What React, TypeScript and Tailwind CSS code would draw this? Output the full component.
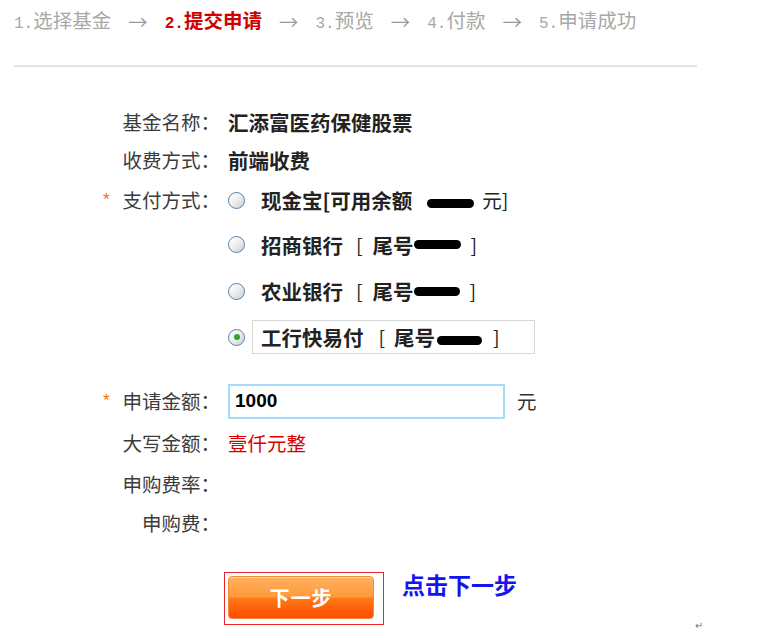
const cjk = "font-['Noto_Sans_CJK_SC',sans-serif]";

function Blob({ w }: { w: number }) {
  return (
    <span
      className="inline-block h-[9px] rounded-full bg-black align-middle"
      style={{ width: w }}
    />
  );
}

function Radio({ checked = false }: { checked?: boolean }) {
  return (
    <span className="flex h-[17px] w-[17px] shrink-0 items-center justify-center rounded-full border-[1.5px] border-[#5580aa] bg-[linear-gradient(135deg,#ffffff_0%,#f0f0f0_45%,#cfcfcf_100%)]">
      {checked && <span className="h-[6px] w-[6px] rounded-full bg-[#2fa52f]" />}
    </span>
  );
}

function Label({ text, required = false }: { text: string; required?: boolean }) {
  return (
    <div className="flex w-[220px] shrink-0 items-center justify-end text-[19.5px] leading-[22px] text-[#3c3c3c]">
      {required && (
        <span className="mr-[11px] font-['Liberation_Mono',monospace] text-[17px] leading-none text-[#ff6a00]">*</span>
      )}
      <span>{text}</span>
    </div>
  );
}

const steps = [
  { n: "1.", t: "选择基金", on: false },
  { n: "2.", t: "提交申请", on: true },
  { n: "3.", t: "预览", on: false },
  { n: "4.", t: "付款", on: false },
  { n: "5.", t: "申请成功", on: false },
];

export default function App() {
  return (
    <div className={`h-[631px] w-[784px] overflow-hidden bg-white ${cjk}`}>
      {/* steps */}
      <div className="flex h-[44px] items-center gap-[17px] pl-[14px] text-[19.5px] leading-[22px]">
        {steps.map((s, i) => (
          <div key={s.t} className="flex items-center gap-[17px]">
            {i > 0 && <span className="text-[#9a9a9a]">→</span>}
            <span className={s.on ? "font-bold text-[#d00000]" : "text-[#a8a8a8]"}>
              <span className="font-['Liberation_Mono',monospace] text-[16px]">{s.n}</span>
              {s.t}
            </span>
          </div>
        ))}
      </div>
      <div className="ml-[14px] mt-[21px] h-[2px] w-[683px] bg-[#e3e3e3]" />

      {/* form */}
      <div className="mt-[36px] flex flex-col">
        <div className="flex h-[38px] items-center">
          <Label text="基金名称：" />
          <span className="ml-[8px] text-[20.5px] font-bold text-[#222]">汇添富医药保健股票</span>
        </div>
        <div className="flex h-[38px] items-center">
          <Label text="收费方式：" />
          <span className="ml-[8px] text-[20.5px] font-bold text-[#222]">前端收费</span>
        </div>

        <div className="flex items-start">
          <div className="flex h-[42px] items-center">
            <Label text="支付方式：" required />
          </div>
          <div className="ml-[8px] flex flex-col text-[20.5px] leading-[24px] text-[#222]">
            <div className="flex h-[42px] items-center">
              <Radio />
              <span className="ml-[16px] font-bold">现金宝[可用余额</span>
              <span className="ml-[15px]"><Blob w={47} /></span>
              <span className="ml-[8px] text-[19.5px]">元]</span>
            </div>
            <div className="flex h-[47px] items-center">
              <Radio />
              <span className="ml-[16px] font-bold">招商银行</span>
              <span className="ml-[13px] text-[19.5px]">[</span>
              <span className="ml-[10px] font-bold">尾号</span>
              <Blob w={47} />
              <span className="ml-[10px] text-[19.5px]">]</span>
            </div>
            <div className="flex h-[46px] items-center">
              <Radio />
              <span className="ml-[16px] font-bold">农业银行</span>
              <span className="ml-[13px] text-[19.5px]">[</span>
              <span className="ml-[10px] font-bold">尾号</span>
              <Blob w={46} />
              <span className="ml-[10px] text-[19.5px]">]</span>
            </div>
            <div className="flex h-[46px] items-center">
              <Radio checked />
              <div className="ml-[7px] flex h-[34px] w-[283px] items-center border border-[#d6d6d6] pl-[8px]">
                <span className="font-bold">工行快易付</span>
                <span className="ml-[15px] text-[19.5px]">[</span>
                <span className="ml-[9px] font-bold">尾号</span>
                <span className="ml-[2px]"><Blob w={45} /></span>
                <span className="ml-[11px] text-[19.5px]">]</span>
              </div>
            </div>
          </div>
        </div>

        <div className="mt-[20px] flex h-[42px] items-center">
          <Label text="申请金额：" required />
          <div className="ml-[8px] flex h-[35px] w-[277px] items-center border-2 border-[#a6dcfa] pl-[5px] font-['Liberation_Sans',sans-serif] text-[19px] font-bold text-black">
            1000
          </div>
          <span className="ml-[12px] text-[19.5px] text-[#333]">元</span>
        </div>
        <div className="flex h-[42px] items-center">
          <Label text="大写金额：" />
          <span className="ml-[8px] text-[19.5px] text-[#d80000]">壹仟元整</span>
        </div>
        <div className="flex h-[40px] items-center">
          <Label text="申购费率：" />
        </div>
        <div className="flex h-[38px] items-center">
          <Label text="申购费：" />
        </div>

        {/* actions */}
        <div className="mt-[30px] flex items-start pl-[224px]">
          <div className="h-[53px] w-[160px] border-[1.5px] border-[#e8262a] pb-[5px] pl-[3px] pr-[9px] pt-[3px]">
            <button className="flex h-[43px] w-[146px] items-center justify-center rounded-[4px] border border-[#ee8d3c] bg-[linear-gradient(to_bottom,#ffb060_0%,#ff9a3c_48%,#ff7a18_52%,#ff4a00_100%)] text-[20px] font-bold tracking-[1px] text-white shadow-[inset_0_1px_0_#ffe08a]">
              下一步
            </button>
          </div>
          <span className="ml-[18px] text-[23px] font-bold leading-[24px] text-[#1414f0]">点击下一步</span>
          <span className="ml-[178px] mt-[48px] text-[10px] leading-[10px] text-[#777]">↵</span>
        </div>
      </div>
    </div>
  );
}
